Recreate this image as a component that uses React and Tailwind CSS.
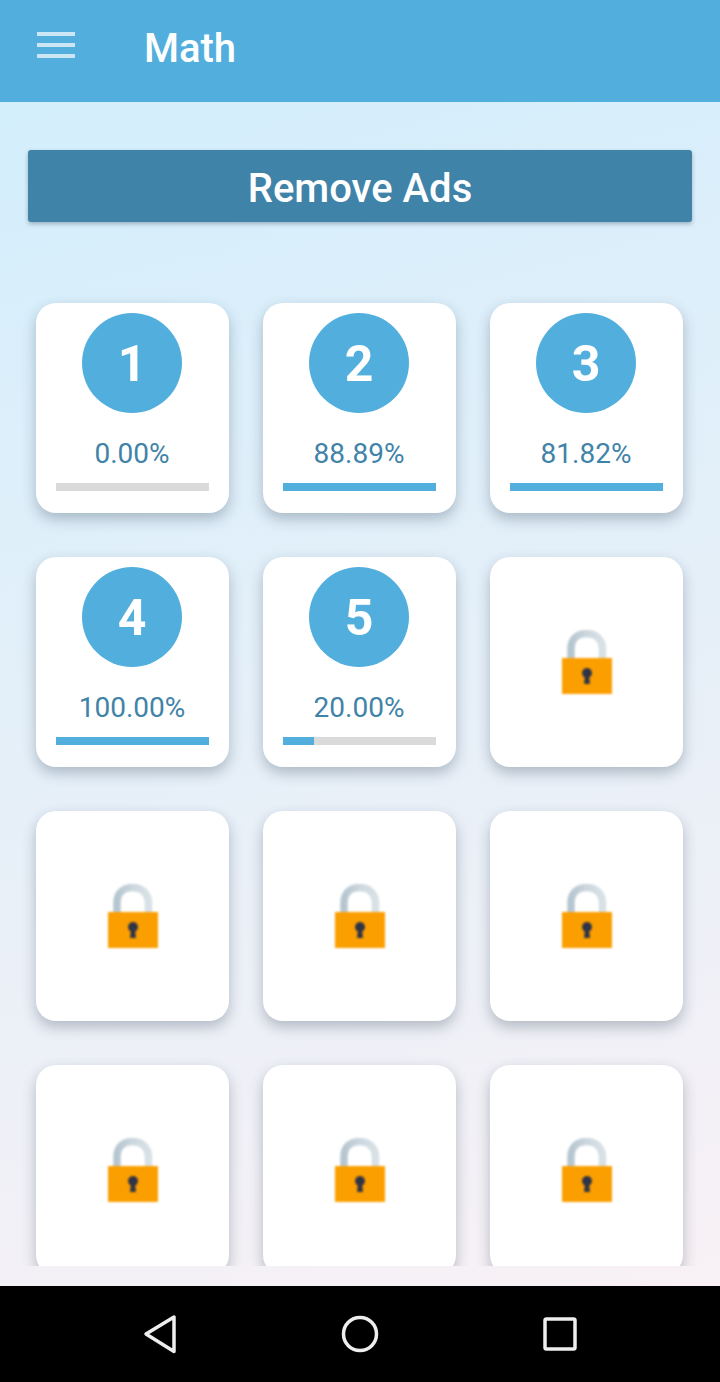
const levels = [
  { n: 1, pct: 0 },
  { n: 2, pct: 88.89, bar: 100 },
  { n: 3, pct: 81.82, bar: 100 },
  { n: 4, pct: 100 },
  { n: 5, pct: 20 },
  ...Array(7).fill({ locked: true }),
];

const Lock = () => (
  <svg width="52" height="66" viewBox="0 0 52 66" className="blur-[0.8px]">
    <defs>
      <linearGradient id="shackle" x1="0" y1="0" x2="1" y2="0">
        <stop offset="0" stopColor="#b6c6d0" />
        <stop offset="0.5" stopColor="#ccd7de" />
        <stop offset="1" stopColor="#d8e1e6" />
      </linearGradient>
    </defs>
    <path d="M10 30V19C10 8.500 17 3.500 25.500 3.500S41.500 8.500 41.500 19V30" fill="none" stroke="url(#shackle)" strokeWidth="7.500" />
    <rect x="1" y="28" width="50" height="36" fill="#fb9f00" />
    <circle cx="26" cy="43" r="5" fill="#2f3447" />
    <path d="M24 45H28L29 54H23Z" fill="#2f3447" />
  </svg>
);

const LevelCard = ({ level }) => {
  if (level.locked) {
    return (
      <div className="flex h-[210px] w-[193px] items-center justify-center rounded-[20px] bg-white shadow-[0_6px_14px_rgba(40,60,80,0.3)]">
        <div className="mt-px pl-px">
          <Lock />
        </div>
      </div>
    );
  }

  const width = level.bar ?? level.pct;

  return (
    <div className="flex h-[210px] w-[193px] flex-col items-center rounded-[20px] bg-white pt-[10px] shadow-[0_6px_14px_rgba(40,60,80,0.3)]">
      <div className="mr-px flex h-[100px] w-[100px] items-center justify-center rounded-full bg-[#52afdd] pt-[3px] text-[50px] font-bold text-white">
        {level.n}
      </div>
      <div className="mt-[23px] mr-px h-[36px] text-[28px] leading-[36px] text-[#3f83a9]">
        {level.pct.toFixed(2)}%
      </div>
      <div className="mt-[11px] h-2 w-[153px] bg-[#dadada]">
        <div className="h-full bg-[#52afdd]" style={{ width: `${width}%` }} />
      </div>
    </div>
  );
};

export default function App() {
  return (
    <div className="flex h-[1382px] w-[720px] flex-col overflow-hidden font-['Roboto',sans-serif]">
      {/* Top bar */}
      <header className="flex h-[102px] shrink-0 items-start bg-[#52afdd] pl-[37px] pt-[23px]">
        <div className="mt-[9px] flex w-[38px] flex-col gap-[7px]">
          <span className="h-1 bg-white/70" />
          <span className="h-1 bg-white/70" />
          <span className="h-1 bg-white/70" />
        </div>
        <h1 className="ml-[69px] text-[40px] leading-[52px] font-medium text-white">Math</h1>
      </header>

      <main className="h-[1184px] shrink-0 bg-[linear-gradient(165deg,#d3eefc,#f8f1f5)] pt-[48px]">
        <div className="mx-[28px] flex h-[72px] items-center justify-center rounded-[3px] bg-[#3f83a9] pt-[6px] text-[40px] font-medium text-white shadow-[0_2px_4px_rgba(40,60,80,0.35)]">
          Remove Ads
        </div>

        {/* Levels */}
        <div className="mt-[44px] h-[1000px] overflow-hidden px-[36px] pt-[37px]">
          <div className="grid grid-cols-[repeat(3,193px)] gap-x-[34px] gap-y-[44px]">
            {levels.map((level, i) => (
              <LevelCard key={i} level={level} />
            ))}
          </div>
        </div>
      </main>

      {/* Android nav bar */}
      <nav className="flex h-[96px] shrink-0 items-center justify-center bg-black">
        <svg width="720" height="96" viewBox="0 0 720 96" fill="none" stroke="#eeeeee" strokeWidth="3.500" strokeLinejoin="round">
          <path d="M146 48L174 31V65.500Z" />
          <circle cx="360" cy="48" r="16.500" />
          <rect x="545" y="33" width="30" height="30" rx="1.500" />
        </svg>
      </nav>
    </div>
  );
}
